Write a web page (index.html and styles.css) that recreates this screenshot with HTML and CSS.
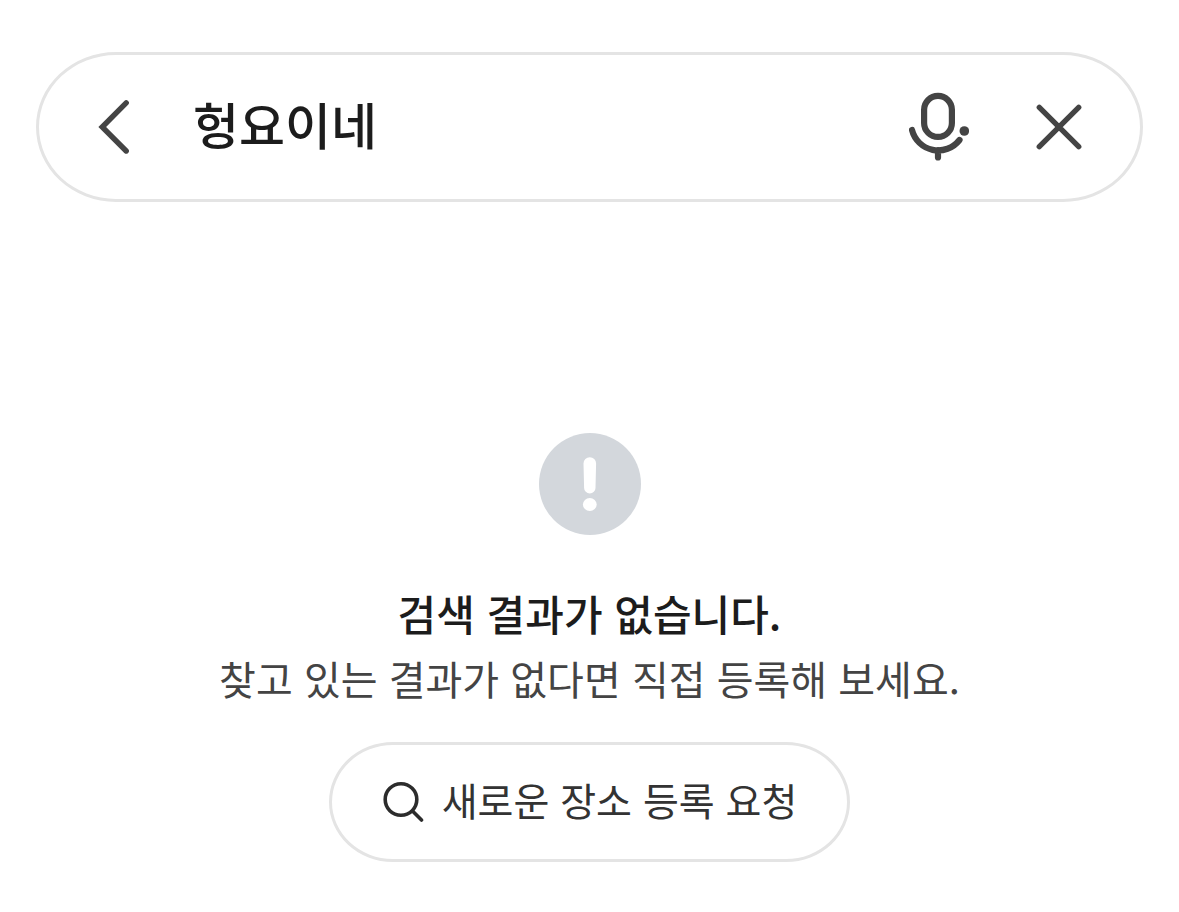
FILE: index.html
```html
<!DOCTYPE html>
<html lang="ko">
<head>
  <meta charset="UTF-8" />
  <meta name="viewport" content="width=device-width, initial-scale=1" />
  <title>장소 검색</title>
  <link rel="stylesheet" href="styles.css">
</head>
<body>

  <form class="search-bar" role="search">
    <button type="button" class="icon-btn back-btn" aria-label="뒤로">
      <svg width="32" height="56" viewBox="0 0 32 56">
        <path d="M29.2 3.8L5.2 28l24 24" />
      </svg>
    </button>
    <input type="text" class="search-input" value="헝요이네" aria-label="장소 검색">
    <button type="button" class="icon-btn mic-btn" aria-label="음성 검색">
      <svg width="60" height="70" viewBox="0 0 60 70">
        <rect x="15.1" y="3.9" width="27.8" height="41" rx="13.9" />
        <path d="M3 38A27 27 0 0 0 50.5 48M29 58v7.4" />
        <circle class="dot" cx="55.3" cy="39" r="4.8" />
      </svg>
    </button>
    <button type="button" class="icon-btn clear-btn" aria-label="지우기">
      <svg width="46" height="46" viewBox="0 0 46 46">
        <path d="M3.3 3.3l39.4 39.4M42.7 3.3L3.3 42.7" />
      </svg>
    </button>
  </form>

  <main class="empty">
    <svg class="empty-icon" width="102" height="102" viewBox="0 0 102 102" aria-hidden="true">
      <circle cx="51" cy="51" r="51" fill="#d3d7dc" />
      <path d="M44.5 30.5a6.3 6.3 0 0 1 12.6 0l-.6 24.5a5.7 5.4 0 0 1-11.4 0z" fill="#fff" />
      <ellipse cx="50.8" cy="71.5" rx="6.9" ry="6.5" fill="#fff" />
    </svg>
    <h1>검색 결과가 없습니다.</h1>
    <p>찾고 있는 결과가 없다면 직접 등록해 보세요.</p>
    <button type="button" class="request-btn">
      <svg width="42" height="42" viewBox="0 0 42 42" aria-hidden="true">
        <circle cx="19" cy="18.5" r="15.8" />
        <path d="M30.5 30l9 9" />
      </svg>
      <span>새로운 장소 등록 요청</span>
    </button>
  </main>

</body>
</html>
```

FILE: styles.css
```css
* {
  box-sizing: border-box;
}
body {
  margin: 0;
  padding: 52px 36px;
  background: #fff;
  color: #1c1c1c;
  font-family: "Noto Sans CJK KR", sans-serif;
}
button, input {
  font-family: inherit;
  color: inherit;
  background: none;
  border: none;
  padding: 0;
}
svg {
  display: block;
  flex-shrink: 0;
}

/* Search bar */
.search-bar {
  display: flex;
  align-items: center;
  height: 150px;
  padding: 0 58px;
  border: 3px solid #e4e4e4;
  border-radius: 80px / 75px;
}
.search-input {
  flex: 1;
  min-width: 0;
  height: 88px;
  margin-left: 64px;
  padding-bottom: 8px;
  font-size: 50px;
  font-weight: 500;
  outline: none;
}
.icon-btn {
  cursor: pointer;
}
.icon-btn svg {
  fill: none;
  stroke: #444;
  stroke-width: 5.4;
  stroke-linecap: round;
}
.mic-btn svg {
  stroke-width: 6.2;
}
.mic-btn .dot {
  fill: #444;
  stroke: none;
}
.clear-btn {
  margin-left: 67px;
}

/* No results */
.empty {
  display: flex;
  flex-direction: column;
  align-items: center;
  padding-top: 231px;
  text-align: center;
}
.empty h1 {
  margin: 46px 0 0;
  font-size: 42px;
  font-weight: 500;
  line-height: 64px;
}
.empty p {
  margin: 0;
  color: #444;
  font-size: 40px;
  line-height: 66px;
}
.request-btn {
  display: flex;
  align-items: center;
  gap: 18px;
  height: 120px;
  margin-top: 31px;
  padding: 0 50px;
  border: 3px solid #e4e4e4;
  border-radius: 64px / 60px;
  color: #333;
  font-size: 39px;
  cursor: pointer;
}
.request-btn span {
  padding-bottom: 7px;
}
.request-btn svg {
  fill: none;
  stroke: #2c2c2c;
  stroke-width: 3.6;
  stroke-linecap: round;
}
```
